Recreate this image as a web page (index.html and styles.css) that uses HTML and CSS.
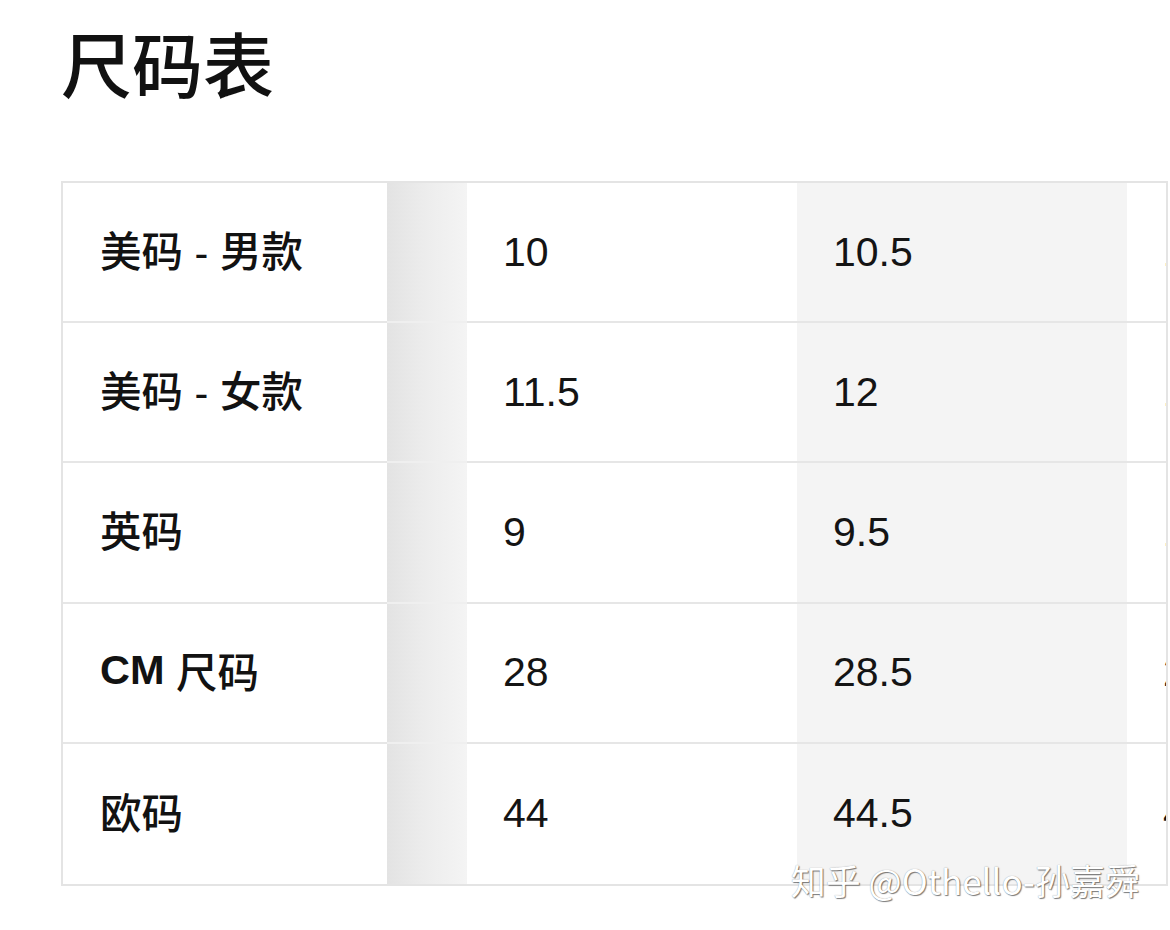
FILE: index.html
```html
<!DOCTYPE html>
<html lang="zh-CN">
<head>
<meta charset="utf-8">
<title>尺码表</title>
<link rel="stylesheet" href="styles.css">
</head>
<body>
<div class="page">
  <h1 class="title">尺码表</h1>
  <div class="table-wrap">
    <div class="grid">
      <div class="cell label">美码 - 男款</div><div class="cell shade"></div><div class="cell">10</div><div class="cell alt">10.5</div><div class="cell">11</div>
      <div class="cell label">美码 - 女款</div><div class="cell shade"></div><div class="cell">11.5</div><div class="cell alt">12</div><div class="cell">12.5</div>
      <div class="cell label">英码</div><div class="cell shade"></div><div class="cell">9</div><div class="cell alt">9.5</div><div class="cell">10</div>
      <div class="cell label"><span class="latin">CM</span>&nbsp;尺码</div><div class="cell shade"></div><div class="cell">28</div><div class="cell alt">28.5</div><div class="cell">29</div>
      <div class="cell label last">欧码</div><div class="cell shade last"></div><div class="cell last">44</div><div class="cell alt last">44.5</div><div class="cell last">45</div>
    </div>
  </div>
  <div class="watermark">知乎 @Othello-孙嘉舜</div>
</div>
</body>
</html>
```
FILE: styles.css
```css
html, body {
  margin: 0;
  padding: 0;
  background: #ffffff;
}
body {
  font-family: "Liberation Sans", "Noto Sans CJK SC", sans-serif;
  color: #141414;
}
.page {
  position: relative;
  width: 1170px;
  height: 930px;
  overflow: hidden;
  padding-left: 61px;
  box-sizing: border-box;
}
.title {
  margin: 26px 0 0 0;
  height: 70px;
  font-family: "Noto Sans CJK SC", sans-serif;
  font-size: 71px;
  line-height: 70px;
  font-weight: 500;
  color: #111111;
}
.table-wrap {
  margin-top: 85px;
  width: 1107px;
  height: 705px;
  box-sizing: border-box;
  border: 2px solid #e4e4e4;
  overflow: hidden;
}
.grid {
  display: grid;
  grid-template-columns: 324px 80px 330px 330px 330px;
  grid-template-rows: repeat(5, 1fr);
  width: 1394px;
  height: 701px;
}
.cell {
  display: flex;
  align-items: center;
  padding-left: 36px;
  border-bottom: 2px solid #e6e6e6;
  font-size: 41px;
  background: #ffffff;
}
.cell.last {
  border-bottom: none;
}
.cell.label {
  padding-left: 37px;
  padding-bottom: 6px;
  font-weight: 500;
  font-size: 41.5px;
  color: #121212;
}
.latin {
  font-weight: 700;
}
.cell.shade {
  padding: 0;
  background: linear-gradient(to right, #e3e3e3 0%, #ececec 45%, #f4f4f4 100%);
  border-bottom-color: #efefef;
}
.cell.alt {
  background: #f4f4f4;
}
.watermark {
  position: absolute;
  right: 30px;
  top: 862px;
  font-family: "Noto Sans CJK SC", sans-serif;
  font-size: 35px;
  line-height: 36px;
  color: #ffffff;
  white-space: nowrap;
  text-shadow: 1px 1px 1px rgba(0, 0, 0, 0.5), 0 0 1px rgba(0, 0, 0, 0.4);
}
```
